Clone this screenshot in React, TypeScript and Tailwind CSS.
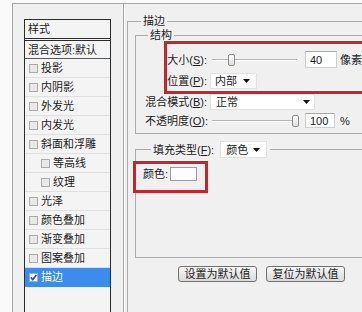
import React from "react";

function Check({ checked }: { checked?: boolean }) {
  if (checked) {
    return (
      <span className="w-[9px] h-[9px] bg-white border border-[#8fb0d8] flex items-center justify-center shrink-0">
        <svg width="7" height="7" viewBox="0 0 7 7">
          <path d="M0.8 3.4 L2.8 5.6 L6.3 0.9" stroke="#2559b4" strokeWidth="1.7" fill="none" />
        </svg>
      </span>
    );
  }
  return <span className="w-[9px] h-[9px] bg-[#e8e8e8] border border-[#ababab] shrink-0" />;
}

const items: { t: string; indent?: boolean; sel?: boolean }[] = [
  { t: "投影" },
  { t: "内阴影" },
  { t: "外发光" },
  { t: "内发光" },
  { t: "斜面和浮雕" },
  { t: "等高线", indent: true },
  { t: "纹理", indent: true },
  { t: "光泽" },
  { t: "颜色叠加" },
  { t: "渐变叠加" },
  { t: "图案叠加" },
  { t: "描边", sel: true },
];

function Arrow() {
  return (
    <svg width="7" height="4" viewBox="0 0 7 4" className="shrink-0">
      <path d="M0 0 L7 0 L3.5 4 Z" fill="#111" />
    </svg>
  );
}

function Slider({ thumb }: { thumb: "a" | "b" }) {
  return (
    <div className="relative w-[85px] h-[12px] ml-[2px] shrink-0">
      <div className="absolute left-0 right-0 top-[5px] h-[2px] border-t border-[#b3b3b3] border-b border-b-white" />
      <div
        className={
          "absolute top-0 w-[7px] h-[12px] rounded-[2px] border border-[#8c8c8c] bg-linear-to-b from-[#ffffff] to-[#dedede] " +
          (thumb === "a" ? "left-[16px]" : "left-[80px]")
        }
      />
    </div>
  );
}

export default function App() {
  return (
    <div className="w-[362px] h-[312px] overflow-hidden bg-[#fafafa] pl-[12px] pt-[3px] relative [font-family:'Liberation_Sans','Noto_Sans_CJK_SC',sans-serif] text-[11px] leading-[14px] text-[#1c1c1c]">
      <div className="h-[400px] border-l border-t border-[#a6a6a6] bg-[#f0f0f0] flex">
        {/* styles list */}
        <div className="pl-[11px] pt-[15px] shrink-0">
          <div className="w-[87px] h-[300px] border border-[#2b2b2b] bg-[#f4f4f4]">
            <div className="h-[21px] border-b-[3px] border-double border-[#2b2b2b] pl-[3px] flex items-center">
              样式
            </div>
            <div className="h-[18px] border-b border-[#5a5a5a] pl-[3px] flex items-center whitespace-nowrap">
              混合选项:默认
            </div>
            {items.map((it) => (
              <div
                key={it.t}
                className={
                  "h-[19px] border-b flex items-center gap-[3px] whitespace-nowrap " +
                  (it.indent ? "pl-[16px] " : "pl-[4px] ") +
                  (it.sel ? "bg-[#3b8ced] text-white border-[#3b8ced]" : "border-[#e0e0e0]")
                }
              >
                <Check checked={it.sel} />
                <span>{it.t}</span>
              </div>
            ))}
          </div>
        </div>

        {/* separator */}
        <div className="ml-[12px] w-[2px] h-full border-l border-[#a9a9a9] border-r border-r-white shrink-0" />

        {/* right panel */}
        <div className="ml-[2px] pt-[10px] shrink-0">
          <fieldset className="w-[260px] h-[320px] min-w-0 border border-[#ababab]">
            <legend className="ml-[13px] px-[2px] leading-[14px]">描边</legend>

            <fieldset className="ml-[7px] w-[240px] min-w-0 border border-[#ababab] pb-[5px]">
              <legend className="ml-[12px] px-[2px] leading-[14px]">结构</legend>
              <div className="pl-[9px] flex flex-col">
                <div className="mt-[9px] h-[17px] flex items-center">
                  <span className="w-[62px] text-right whitespace-nowrap">
                    大小(<span className="underline">S</span>):
                  </span>
                  <div className="ml-[3px] flex items-center">
                    <Slider thumb="a" />
                    <div className="ml-[8px] w-[32px] h-[17px] bg-white border border-[#cfcfcf] border-t-[#a9a9a9] flex items-center pl-[4px]">
                      40
                    </div>
                    <span className="ml-[3px] whitespace-nowrap">像素</span>
                  </div>
                </div>
                <div className="mt-[5px] h-[16px] flex items-center">
                  <span className="w-[62px] text-right whitespace-nowrap">
                    位置(<span className="underline">P</span>):
                  </span>
                  <div className="ml-[3px] w-[47px] h-[16px] bg-white border border-[#e2e2e2] flex items-center justify-between pl-[4px] pr-[6px]">
                    <span>内部</span>
                    <Arrow />
                  </div>
                </div>
                <div className="mt-[5px] h-[16px] flex items-center">
                  <span className="w-[62px] text-right whitespace-nowrap">
                    混合模式(<span className="underline">B</span>):
                  </span>
                  <div className="ml-[3px] w-[105px] h-[16px] bg-white border border-[#e2e2e2] flex items-center justify-between pl-[5px] pr-[4px]">
                    <span>正常</span>
                    <Arrow />
                  </div>
                </div>
                <div className="mt-[3px] h-[15px] flex items-center">
                  <span className="w-[62px] text-right whitespace-nowrap">
                    不透明度(<span className="underline">O</span>):
                  </span>
                  <div className="ml-[3px] flex items-center">
                    <Slider thumb="b" />
                    <div className="ml-[8px] w-[30px] h-[15px] bg-white border border-[#cfcfcf] border-t-[#a9a9a9] flex items-center pl-[4px]">
                      100
                    </div>
                    <span className="ml-[5px]">%</span>
                  </div>
                </div>
              </div>
            </fieldset>

            <fieldset className="ml-[7px] mt-[7px] w-[240px] min-w-0 border border-[#ababab] pb-[76px]">
              <legend className="ml-[15px] pl-[2px] pr-[3px]">
                <div className="flex items-center h-[17px]">
                  <span className="whitespace-nowrap">
                    填充类型(<span className="underline">F</span>):
                  </span>
                  <div className="ml-[6px] w-[47px] h-[17px] bg-white border border-[#e2e2e2] flex items-center justify-between pl-[5px] pr-[6px]">
                    <span>颜色</span>
                    <Arrow />
                  </div>
                </div>
              </legend>
              <div className="mt-[9px] pl-[7px] h-[14px] flex items-center">
                <span>颜色:</span>
                <div className="ml-[2px] w-[27px] h-[14px] bg-white border border-[#9c9c9c]" />
              </div>
            </fieldset>

            <div className="mt-[8px] ml-[50px] flex gap-[9px]">
              <button className="w-[79px] h-[16px] border border-[#707070] rounded-[3px] bg-linear-to-b from-[#f7f7f7] to-[#dadada] text-[11px] leading-[14px] flex items-center justify-center">
                设置为默认值
              </button>
              <button className="w-[79px] h-[16px] border border-[#707070] rounded-[3px] bg-linear-to-b from-[#f7f7f7] to-[#dadada] text-[11px] leading-[14px] flex items-center justify-center">
                复位为默认值
              </button>
            </div>
          </fieldset>
        </div>
      </div>

      {/* red annotation boxes */}
      <div className="absolute left-[164px] top-[41px] w-[210px] h-[53px] border-[3px] border-[#c4262e]" />
      <div className="absolute left-[133px] top-[161px] w-[75px] h-[32px] border-[3px] border-[#c4262e]" />
    </div>
  );
}
